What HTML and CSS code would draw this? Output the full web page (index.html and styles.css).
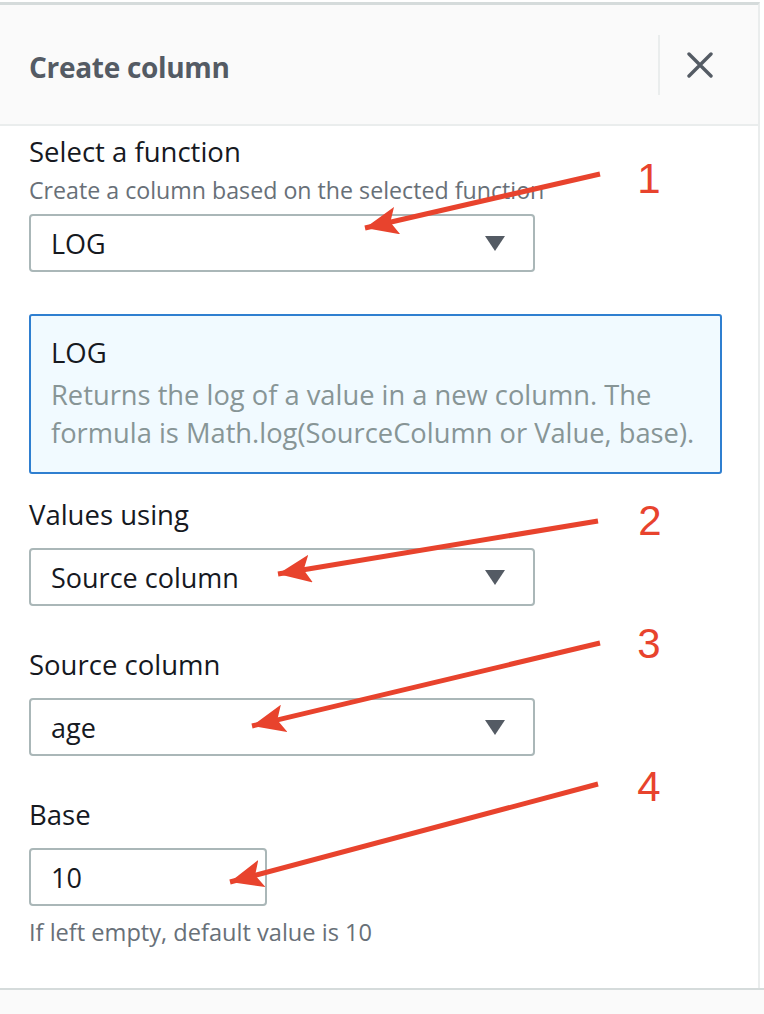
FILE: index.html
```html
<!DOCTYPE html>
<html lang="en">
<head>
<meta charset="utf-8">
<title>Create column</title>
<link rel="stylesheet" href="styles.css">
</head>
<body>
<div class="page">
  <div class="panel">
    <div class="header">
      <h2 class="title">Create column</h2>
      <div class="header-actions">
        <span class="divider"></span>
        <button class="close" aria-label="Close">
          <svg width="26" height="26" viewBox="0 0 26 26"><path d="M2 2 L24 24 M24 2 L2 24" stroke="#545b64" stroke-width="3.4" stroke-linecap="round" fill="none"/></svg>
        </button>
      </div>
    </div>
    <div class="body">
      <div class="field first">
        <div class="label">Select a function</div>
        <div class="desc">Create a column based on the selected function</div>
        <div class="select"><span>LOG</span><span class="caret"></span></div>
      </div>
      <div class="info">
        <div class="info-title">LOG</div>
        <div class="info-text">Returns the log of a value in a new column. The formula is Math.log(SourceColumn or Value, base).</div>
      </div>
      <div class="field">
        <div class="label">Values using</div>
        <div class="select"><span>Source column</span><span class="caret"></span></div>
      </div>
      <div class="field spaced">
        <div class="label">Source column</div>
        <div class="select"><span>age</span><span class="caret"></span></div>
      </div>
      <div class="field spaced">
        <div class="label">Base</div>
        <div class="input">10</div>
        <div class="hint">If left empty, default value is 10</div>
      </div>
    </div>
  </div>
  <div class="footer"></div>

  <svg class="annotations" width="764" height="1014" viewBox="0 0 764 1014">
    <defs>
      <marker id="head" markerUnits="userSpaceOnUse" markerWidth="36" markerHeight="28" refX="33" refY="14" orient="auto">
        <path d="M0 0 L33 14 L0 28 L7 14 Z" fill="#e8432d"/>
      </marker>
    </defs>
    <g stroke="#e8432d" stroke-width="5" fill="none">
      <line x1="600" y1="174" x2="365" y2="228" marker-end="url(#head)"/>
      <line x1="598" y1="521" x2="278" y2="574" marker-end="url(#head)"/>
      <line x1="600" y1="643" x2="252" y2="726" marker-end="url(#head)"/>
      <line x1="598" y1="784" x2="230" y2="882" marker-end="url(#head)"/>
    </g>
    <g class="num">
      <text x="649" y="193">1</text>
      <text x="650" y="535">2</text>
      <text x="649" y="658">3</text>
      <text x="649" y="801">4</text>
    </g>
  </svg>
</div>
</body>
</html>
```

FILE: styles.css
```css
* { box-sizing: border-box; }
html, body { margin: 0; padding: 0; background: #ffffff; }
body { font-family: "Open Sans", "Noto Sans", sans-serif; color: #16191f; }

.page {
  position: relative;
  width: 764px;
  height: 1014px;
  padding-top: 2px;
  overflow: hidden;
}

.panel {
  width: 760px;
  height: 986px;
  border-top: 3px solid #d5dbdb;
  border-right: 2px solid #eaeded;
  display: flex;
  flex-direction: column;
}

.header {
  height: 121px;
  background: #fafafa;
  border-bottom: 2px solid #eaeded;
  display: flex;
  align-items: center;
  justify-content: space-between;
  padding: 0 0 0 29px;
}

.title {
  margin: 4px 0 0 0;
  font-size: 28px;
  font-weight: 700;
  color: #545b64;
  letter-spacing: -0.3px;
}

.header-actions {
  display: flex;
  align-items: center;
  height: 100%;
}

.divider {
  width: 2px;
  height: 60px;
  background: #eaeded;
  margin-right: 27px;
}

.close {
  border: 0;
  background: transparent;
  padding: 0;
  width: 26px;
  height: 26px;
  margin-right: 45px;
  display: flex;
}

.body {
  padding: 8px 0 0 29px;
  flex: 1;
}

.field { margin-top: 23px; }
.field.first { margin-top: 0; }
.field.spaced { margin-top: 41px; }

.label {
  font-size: 27.5px;
  line-height: 36px;
  margin-bottom: 15px;
}
.field.first .label { margin-bottom: 5px; }

.desc {
  font-size: 23.2px;
  line-height: 30px;
  color: #687078;
  margin-bottom: 9px;
}

.select, .input {
  height: 58px;
  border: 2px solid #aab7b8;
  border-radius: 4px;
  background: #fff;
  display: flex;
  align-items: center;
  justify-content: space-between;
  padding: 0 28px 0 20px;
  font-size: 27px;
}
.select { width: 506px; }
.input { width: 238px; }

.caret {
  width: 0;
  height: 0;
  border-left: 10px solid transparent;
  border-right: 10px solid transparent;
  border-top: 15px solid #545b64;
}

.info {
  margin-top: 42px;
  width: 693px;
  background: #f1faff;
  border: 2px solid #2f7fd0;
  border-radius: 3px;
  padding: 19px 20px 20px 20px;
}
.info-title {
  font-size: 27.5px;
  line-height: 36px;
  margin-bottom: 5px;
}
.info-text {
  font-size: 27.3px;
  line-height: 38px;
  color: #879596;
}

.hint {
  margin-top: 11px;
  font-size: 23.6px;
  line-height: 30px;
  color: #687078;
}

.footer {
  height: 26px;
  border-top: 2px solid #d5dbdb;
  background: #fafafa;
}

.annotations {
  position: absolute;
  left: 0;
  top: 0;
  pointer-events: none;
}
.num text {
  font-family: "Liberation Sans", Arial, sans-serif;
  font-size: 42px;
  fill: #e8432d;
  text-anchor: middle;
}
```
